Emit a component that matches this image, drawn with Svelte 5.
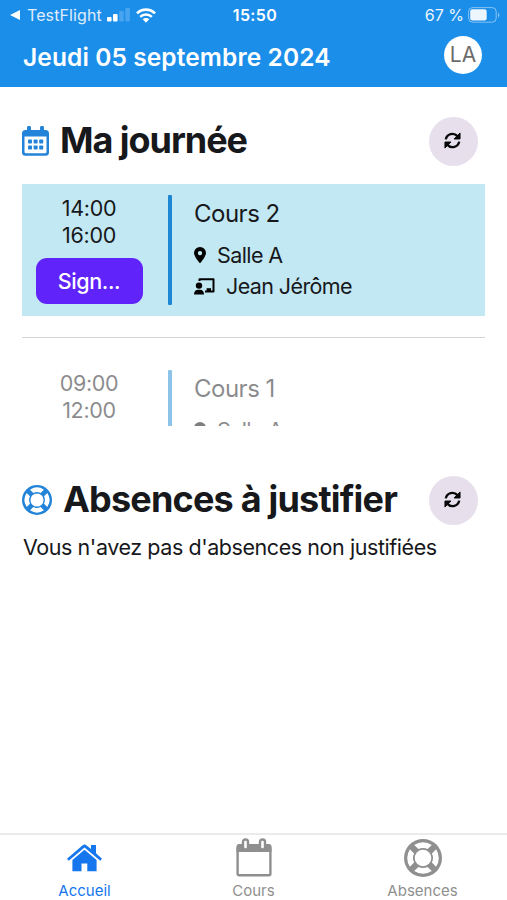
<div class="app">
    <header>
        <div class="status">
            <div class="carrier">
                <svg width="10" height="10" viewBox="0 0 10 10"><path d="M0 5 10 0v10z" /></svg>
                <span class="back">TestFlight</span>
                <svg class="signal" width="23" height="14" viewBox="0 0 23 14">
                    <rect y="9" width="4.600" height="4.600" rx="1" />
                    <rect x="6" y="6" width="4.600" height="7.600" rx="1" />
                    <rect x="12.200" y="3" width="4.600" height="10.600" rx="1" opacity=".2" />
                    <rect x="18.300" width="4.600" height="13.600" rx="1" opacity=".2" />
                </svg>
                <svg class="wifi" width="20" height="15" viewBox="0 0 20 15">
                    <g fill="none" stroke="#fff" stroke-width="2.6">
                        <path d="M1 5.4a12.7 12.7 0 0 1 18 0" />
                        <path d="M4.2 8.9a8.2 8.2 0 0 1 11.6 0" />
                    </g>
                    <path d="M6.7 11.3a4.7 4.7 0 0 1 6.6 0L10 14.7z" />
                </svg>
            </div>
            <span class="clock">15:50</span>
            <div class="power">
                <span>67 %</span>
                <svg width="32" height="16" viewBox="0 0 32 16">
                    <rect x=".6" y=".6" width="27.6" height="14.6" rx="4" fill="none" stroke="#fff" opacity=".5" />
                    <rect x="2.2" y="2.3" width="16.5" height="11.2" rx="2.2" />
                    <path d="M30 5.5c1.8.7 1.8 4.3 0 5z" opacity=".5" />
                </svg>
            </div>
        </div>
        <div class="title">
            <span class="date">{today}</span>
            <span class="avatar">LA</span>
        </div>
    </header>

    <main>
        <section class="day">
            <div class="heading">
                <svg class="calendar" width="27" height="30" viewBox="0 0 27 30">
                    <path
                        fill-rule="evenodd"
                        d="M5 4V1.700a1.700 1.700 0 0 1 4 0V4h9V1.700a1.700 1.700 0 0 1 4 0V4h1.500A3.500 3.500 0 0 1 27 7.500v18.700a3.500 3.500 0 0 1-3.500 3.500h-20A3.500 3.500 0 0 1 0 26.200V7.500A3.500 3.500 0 0 1 3.500 4zM2.500 10.500v15.200q0 1.500 1.500 1.500h19q1.500 0 1.500-1.500V10.500z" />
                    {#each [13.5, 19.5] as y}
                        {#each [6, 11.6, 17.2] as x}
                            <rect {x} {y} width="4" height="4" rx=".8" />
                        {/each}
                    {/each}
                </svg>
                <h1>Ma journée</h1>
                {@render refresh()}
            </div>

            <div class="lessons">
                {#each lessons as lesson}
                    <article class:current={lesson.current}>
                        <div class="hours">
                            <span>{lesson.start}</span>
                            <span>{lesson.end}</span>
                            {#if lesson.current}
                                <button class="sign">Sign...</button>
                            {/if}
                        </div>
                        <div class="bar"></div>
                        <div class="details">
                            <h2>{lesson.name}</h2>
                            <p>
                                <svg class="pin" width="12" height="16" viewBox="0 0 12 16">
                                    <path fill-rule="evenodd" d="M6 0a6 6 0 0 0-6 6c0 2.700 3.600 7.500 5.200 9.600a1 1 0 0 0 1.600 0C8.400 13.500 12 8.700 12 6a6 6 0 0 0-6-6zm0 3.900a2.200 2.200 0 1 1 0 4.400 2.200 2.200 0 0 1 0-4.400z" />
                                </svg>
                                {lesson.room}
                            </p>
                            <p class="teacher">
                                <svg width="21" height="17" viewBox="0 0 21 17">
                                    <circle cx="5" cy="7.600" r="3.200" />
                                    <path d="M0 16.500c0-3 1.600-4.700 4-4.700h2c2.400 0 4 1.700 4 4.700z" />
                                    <path d="M5.500 2.900V1.200h14v12.300H11" fill="none" stroke="#000" stroke-width="2" stroke-linejoin="round" />
                                    <path d="M12.600 13v-2.800h4.400V13z" />
                                </svg>
                                {lesson.teacher}
                            </p>
                        </div>
                    </article>
                {/each}
            </div>
        </section>

        <section class="missing">
            <div class="heading">
                {@render ring(30)}
                <h1>Absences à justifier</h1>
                {@render refresh()}
            </div>
            <p class="empty">Vous n'avez pas d'absences non justifiées</p>
        </section>
    </main>

    <nav>
        <a class="active" href="#accueil">
            <svg class="home" width="35" height="35" viewBox="0 0 35 35">
                <path d="M0 20.700 15.400 7.400q2.100-1.700 4.200 0l4.400 3.700V7h5v8.300l6 5.400-1.700 2L17.500 9.400 1.700 22.700z" />
                <path d="M5.400 22 17.500 11.800 29.600 22v11.300H20.300V25.600h-5.800v7.700H5.400z" />
            </svg>
            <span>Accueil</span>
        </a>
        <a href="#cours">
            <svg class="month" width="36" height="39" viewBox="0 0 36 39">
                <path d="M3 6h30a2.500 2.500 0 0 1 2.500 2.500v5.500H.5V8.500A2.500 2.500 0 0 1 3 6z" />
                <rect x="1.600" y="9" width="32.800" height="28.300" rx="1.500" fill="none" stroke="currentColor" stroke-width="2.400" />
                <rect x="7" y="1.500" width="5" height="10" rx="2.300" fill="#fff" stroke="currentColor" stroke-width="2.400" />
                <rect x="24" y="1.500" width="5" height="10" rx="2.300" fill="#fff" stroke="currentColor" stroke-width="2.400" />
            </svg>
            <span>Cours</span>
        </a>
        <a href="#absences">
            {@render ring(38)}
            <span>Absences</span>
        </a>
    </nav>
</div>

{#snippet refresh()}
    <button class="refresh" aria-label="Actualiser">
        <svg width="17" height="17" viewBox="0 0 18 18">
            <g fill="none" stroke="#080808" stroke-width="2.500">
                <path d="M1.900 7.800A7.100 7.100 0 0 1 14.200 4.400" />
                <path d="M16.100 10.200A7.100 7.100 0 0 1 3.800 13.600" />
            </g>
            <path d="M17 1v6.400h-6.400zM1 17v-6.400h6.400z" stroke="#080808" stroke-linejoin="round" />
        </svg>
    </button>
{/snippet}

{#snippet ring(size: number)}
    <svg class="ring" width={size} height={size} viewBox="0 0 38 38">
        <circle cx="19" cy="19" r="19" />
        <circle cx="19" cy="19" r="8.300" fill="#fff" />
        <g fill="#fff">
            {#each [0, 90, 180, 270] as angle}
                <path d="M10.200 5.900a15.800 15.800 0 0 1 17.600 0L23.600 10.100a10.400 10.400 0 0 0-9.200 0z" transform="rotate({angle} 19 19)" />
            {/each}
        </g>
    </svg>
{/snippet}

<script lang="ts">
    const today = "Jeudi 05 septembre 2024";

    const lessons = [
        { name: "Cours 2", start: "14:00", end: "16:00", room: "Salle A", teacher: "Jean Jérôme", current: true },
        { name: "Cours 1", start: "09:00", end: "12:00", room: "Salle A", teacher: "Jean Jérôme", current: false },
    ];
</script>

<style>
    :global(body) {
        background: #fff;
    }

    .app {
        box-sizing: border-box;
        height: 900px;
        display: flex;
        flex-direction: column;
        overflow: hidden;
        font-family: Inter, "Liberation Sans", sans-serif;
        color: #17181b;
    }

    svg {
        display: block;
        flex-shrink: 0;
        fill: currentColor;
    }

    h1, h2, p {
        margin: 0;
        font-weight: 400;
        white-space: nowrap;
    }

    button {
        border: 0;
        padding: 0;
        font: inherit;
    }

    header {
        box-sizing: border-box;
        height: 87px;
        flex-shrink: 0;
        background: #1b8eea;
        color: #fff;
    }

    .status {
        height: 29px;
        display: grid;
        grid-template-columns: 1fr auto 1fr;
        align-items: center;
        padding: 0 7px 0 10px;
        font-size: 16px;
        line-height: 30px;
    }

    .carrier, .power {
        display: flex;
        align-items: center;
    }

    .back {
        margin-left: 7px;
        letter-spacing: .1px;
        opacity: .85;
    }

    .signal {
        margin-left: 5px;
    }

    .wifi {
        margin-left: 6px;
    }

    .clock {
        font-weight: 600;
        letter-spacing: .4px;
    }

    .power {
        justify-content: flex-end;
        gap: 4px;
        opacity: .92;
    }

    .title {
        height: 52px;
        display: flex;
        justify-content: space-between;
        align-items: center;
        padding: 0 25px 0 23px;
    }

    .date {
        padding-top: 4px;
        font-size: 24.5px;
        font-weight: 600;
        letter-spacing: .1px;
    }

    .avatar {
        width: 38px;
        height: 38px;
        border-radius: 50%;
        background: #fff;
        color: #6b6b6b;
        font-size: 21px;
        line-height: 38px;
        text-align: center;
    }

    main {
        flex: 1;
        padding: 30px 22px 0;
    }

    .heading {
        height: 48px;
        display: flex;
        align-items: center;
        padding-right: 7px;
    }

    .heading svg {
        color: #2383d8;
    }

    h1 {
        font-size: 36px;
        font-weight: 700;
        line-height: 46px;
        padding-bottom: 2px;
        letter-spacing: -.8px;
    }

    .day h1 {
        margin-left: 11px;
        letter-spacing: -1.050px;
    }

    .missing h1 {
        margin-left: 11px;
    }

    .refresh {
        width: 49px;
        height: 49px;
        margin-left: auto;
        padding: 0 2px 2px 0;
        display: grid;
        place-items: center;
        border-radius: 50%;
        background: #e7e0ec;
    }

    .heading .refresh svg {
        color: #080808;
    }

    .lessons {
        height: 242px;
        margin-top: 19px;
        overflow: hidden;
    }

    article {
        box-sizing: border-box;
        height: 132px;
        display: flex;
        padding: 11px 0;
    }

    article + article {
        box-sizing: content-box;
        height: 110px;
        margin-top: 21px;
        padding-top: 32px;
        border-top: 1px solid #d5d5d5;
    }

    .current {
        background: #c2e8f3;
    }

    .hours {
        width: 134px;
        display: flex;
        flex-direction: column;
        align-items: center;
        font-size: 21.5px;
        line-height: 26.500px;
        letter-spacing: -.3px;
    }

    .bar {
        width: 4px;
        margin-left: 12px;
        background: #1d87d3;
        border-radius: 1px;
    }

    .details {
        margin-left: 22px;
        padding-top: 3px;
    }

    h2 {
        font-size: 24px;
        line-height: 32px;
        letter-spacing: -.5px;
    }

    .details p {
        display: flex;
        align-items: center;
        gap: 11px;
        margin-top: 9px;
        font-size: 21.5px;
        line-height: 32px;
        letter-spacing: -.6px;
    }

    .details .teacher {
        margin-top: -1px;
    }

    .details svg {
        color: #000;
    }

    article:not(.current) > div {
        opacity: .5;
    }

    .sign {
        width: 107px;
        height: 46px;
        margin-top: 10px;
        border-radius: 11px;
        background: #6024fb;
        color: #fff;
        font-size: 21.5px;
        font-weight: 500;
        letter-spacing: -.4px;
    }

    .missing {
        margin-top: 50px;
    }

    .empty {
        margin: 9px 0 0 1px;
        font-size: 21.5px;
        line-height: 28px;
        letter-spacing: -.43px;
    }

    nav {
        height: 65px;
        flex-shrink: 0;
        display: grid;
        grid-template-columns: repeat(3, 1fr);
        border-top: 2px solid #ebebeb;
    }

    a {
        display: flex;
        flex-direction: column;
        align-items: center;
        color: #8f8f8f;
        font-size: 15px;
        line-height: 19px;
        text-decoration: none;
    }

    .active {
        color: #1676ed;
    }

    a span {
        margin-top: auto;
    }

    .home, .month {
        margin-top: 3px;
    }

    nav .ring {
        margin-top: 4px;
    }
</style>
